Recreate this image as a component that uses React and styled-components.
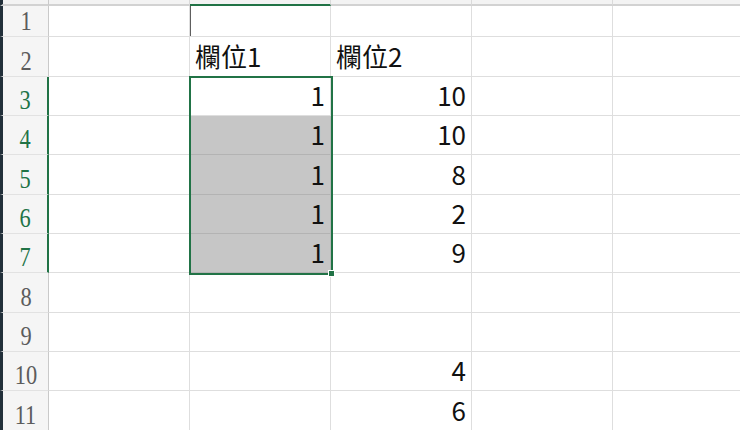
import { Fragment } from 'react';
import styled, { createGlobalStyle } from 'styled-components';

const GlobalStyle = createGlobalStyle`
  html, body {
    margin: 0;
    padding: 0;
    background: #fff;
    overflow: hidden;
  }
`;

const ROW_HEIGHTS = [31, 40, 39, 39, 40, 39, 39, 40, 39, 39, 40];
const COLS = ['A', 'B', 'C', 'D', 'E'];

// row number -> cell values (B, C)
const DATA = {
    2: { B: '欄位1', C: '欄位2' },
    3: { B: 1, C: 10 },
    4: { B: 1, C: 10 },
    5: { B: 1, C: 8 },
    6: { B: 1, C: 2 },
    7: { B: 1, C: 9 },
    10: { C: 4 },
    11: { C: 6 },
};

const Sheet = styled.div`
    position: relative;
    display: grid;
    grid-template-columns: 49px repeat(5, 141px);
    grid-template-rows: 6px ${ROW_HEIGHTS.map((h) => `${h}px`).join(' ')};
    width: 740px;
    height: 430px;
    overflow: hidden;
    background: #fff;
`;

const Corner = styled.div`
    box-sizing: border-box;
    background: #f3f3f3;
    border-left: 3px solid #22303a;
    border-right: 1px solid #c9c9c9;
    border-bottom: 2px solid #d2d2d2;
`;

const ColHead = styled.div`
    box-sizing: border-box;
    background: #f3f3f3;
    border-right: 1px solid #dadada;
    border-bottom: 2px solid ${(p) => (p.$active ? '#217346' : '#d2d2d2')};
`;

const RowHead = styled.div`
    box-sizing: border-box;
    display: flex;
    align-items: flex-end;
    justify-content: center;
    background: #f5f5f5;
    border-left: 3px solid #22303a;
    border-bottom: 1px solid #e2e2e2;
    border-right: ${(p) => (p.$active ? '2px solid #217346' : '1px solid #c9c9c9')};
    color: ${(p) => (p.$active ? '#217346' : '#5c5c5c')};
    font-family: 'Liberation Serif', 'DejaVu Serif', serif;
    font-size: 28px;
    line-height: 1;
    padding-bottom: 1px;
`;

const RowNum = styled.span`
    display: inline-block;
    transform: scaleX(0.8);
`;

const Cell = styled.div`
    box-sizing: border-box;
    display: flex;
    align-items: flex-end;
    justify-content: ${(p) => (p.$text ? 'flex-start' : 'flex-end')};
    padding: 0 5px 7px 5px;
    background: ${(p) => (p.$shade ? '#c6c6c6' : '#fff')};
    border-right: 1px solid ${(p) => (p.$shade ? '#b9b9b9' : '#dedede')};
    border-bottom: 1px solid ${(p) => (p.$shade ? '#b3b3b3' : '#dedede')};
    box-shadow: ${(p) => (p.$mark ? 'inset 1px 0 0 #5e5e5e' : 'none')};
    color: #111;
    font-family: 'Noto Sans CJK TC', 'Noto Sans', sans-serif;
    font-size: 26px;
    line-height: 1;
    white-space: nowrap;
    overflow: hidden;
`;

const Selection = styled.div`
    position: absolute;
    left: 189px;
    top: 76px;
    width: 144px;
    height: 199px;
    box-sizing: border-box;
    border: 2px solid #217346;
    pointer-events: none;
`;

const FillHandle = styled.div`
    position: absolute;
    left: 328px;
    top: 270px;
    width: 7px;
    height: 7px;
    box-sizing: border-box;
    background: #217346;
    border: 1px solid #fff;
`;

const isSelected = (r, c) => c === 'B' && r >= 3 && r <= 7;

const App = () => {
    const rows = ROW_HEIGHTS.map((_, i) => i + 1);
    return (
        <>
            <GlobalStyle />
            <Sheet>
                <Corner />
                {COLS.map((c) => (
                    <ColHead key={c} $active={c === 'B'} />
                ))}
                {rows.map((r) => (
                    <Fragment key={r}>
                        <RowHead $active={r >= 3 && r <= 7}>
                            <RowNum>{r}</RowNum>
                        </RowHead>
                        {COLS.map((c) => {
                            const v = DATA[r] ? DATA[r][c] : undefined;
                            return (
                                <Cell
                                    key={c}
                                    $text={typeof v === 'string'}
                                    $shade={isSelected(r, c) && r > 3}
                                    $mark={c === 'B' && r === 1}
                                >
                                    {v}
                                </Cell>
                            );
                        })}
                    </Fragment>
                ))}
                <Selection />
                <FillHandle />
            </Sheet>
        </>
    );
};

export default App;
